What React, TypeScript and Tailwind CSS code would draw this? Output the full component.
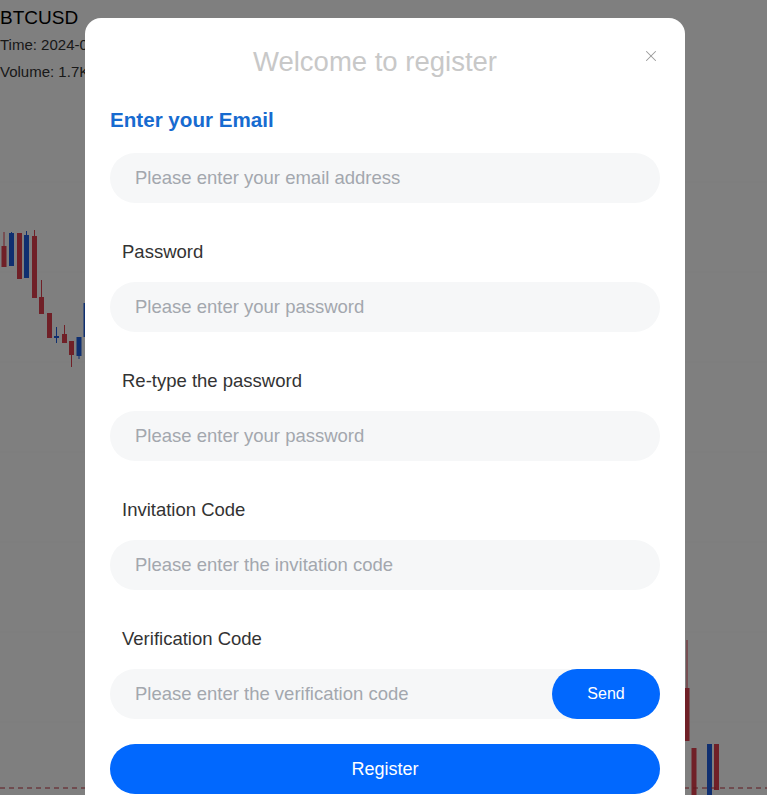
import React from 'react';
import { X } from 'lucide-react';

type Candle = { x: number; o: number; c: number; h: number; l: number; up: boolean };

// candles drawn in page coordinates (the chart behind the modal)
const candles: Candle[] = [
  { x: 4, o: 246, c: 267, h: 232, l: 267, up: false },
  { x: 11.5, o: 233, c: 266, h: 232, l: 266, up: true },
  { x: 19.5, o: 233, c: 279, h: 233, l: 279, up: false },
  { x: 26.5, o: 235, c: 278, h: 231, l: 278, up: true },
  { x: 34.5, o: 236, c: 298, h: 230, l: 298, up: false },
  { x: 41.5, o: 297, c: 314, h: 280, l: 314, up: false },
  { x: 49.5, o: 313, c: 338, h: 313, l: 338, up: false },
  { x: 56.5, o: 336, c: 338, h: 327, l: 343, up: true },
  { x: 64.5, o: 334, c: 343, h: 325, l: 343, up: false },
  { x: 71.5, o: 341, c: 355, h: 341, l: 367, up: false },
  { x: 79, o: 337, c: 356, h: 337, l: 359, up: true },
  { x: 86, o: 303, c: 337, h: 300, l: 340, up: true },
  { x: 687, o: 688, c: 741, h: 640, l: 741, up: false },
  { x: 694, o: 748, c: 800, h: 748, l: 800, up: false },
  { x: 709.5, o: 744, c: 800, h: 744, l: 800, up: true },
  { x: 716.5, o: 744, c: 790, h: 744, l: 790, up: false },
];

function Chart() {
  return (
    <svg className="absolute inset-0" width={767} height={795}>
      {[182, 272, 362, 452, 542, 632, 722].map((y) => (
        <line key={y} x1={0} x2={767} y1={y} y2={y} stroke="#f9f9f9" strokeWidth={1} />
      ))}
      {candles.map((k, i) => {
        const color = k.up ? '#1e5fe0' : '#e0404f';
        const top = Math.min(k.o, k.c);
        const bh = Math.max(Math.abs(k.c - k.o), 1.5);
        return (
          <g key={i}>
            <line x1={k.x} x2={k.x} y1={k.h} y2={k.l} stroke={color} strokeWidth={1} />
            <rect x={k.x - 2.5} y={top} width={5} height={bh} fill={color} />
          </g>
        );
      })}
      <line x1={0} x2={767} y1={788} y2={788} stroke="#c0303f" strokeWidth={1} strokeDasharray="5 4" />
    </svg>
  );
}

function Field({ placeholder }: { placeholder: string }) {
  return (
    <div className="h-[50px] rounded-full bg-[#f6f7f8] flex items-center pl-[25px] text-[18.5px] text-[#a3a7ae]">
      {placeholder}
    </div>
  );
}

function Label({ children }: { children: React.ReactNode }) {
  return (
    <div className="pt-[37px] pb-[18px] pl-[12px] text-[18.5px] leading-[24px] text-[#333]">{children}</div>
  );
}

export default function App() {
  return (
    <div
      className="relative w-[767px] h-[795px] overflow-hidden bg-white"
      style={{ fontFamily: '"Liberation Sans", Arial, sans-serif' }}
    >
      <Chart />
      {/* chart header */}
      <div className="relative flex flex-col text-[#333]">
        <div className="h-[36px] flex items-center text-[19px] text-black">BTCUSD</div>
        <div className="h-[18px] flex items-center text-[15px]">Time: 2024-05-20 14:00</div>
        <div className="h-[36px] flex items-center text-[15px]">Volume: 1.7K</div>
      </div>
      <div className="absolute left-[662px] top-[34px] text-[15px] text-[#333]">32</div>

      {/* overlay */}
      <div className="absolute inset-0 bg-black/50" />

      {/* register modal */}
      <div className="absolute left-[85px] top-[18px] w-[600px] h-[800px] rounded-t-[16px] bg-white px-[25px] pt-[28px]">
        <button className="absolute right-[25px] top-[29px] text-[#9a9a9a]">
          <X size={18} strokeWidth={1.4} />
        </button>
        <div className="h-[32px] pr-[20px] text-center text-[27.5px] leading-[32px] text-[#c8c8c8]">Welcome to register</div>
        <div className="pt-[30px] pb-[21px] text-[20.6px] leading-[24px] font-bold text-[#176bd0]">Enter your Email</div>
        <Field placeholder="Please enter your email address" />
        <Label>Password</Label>
        <Field placeholder="Please enter your password" />
        <Label>Re-type the password</Label>
        <Field placeholder="Please enter your password" />
        <Label>Invitation Code</Label>
        <Field placeholder="Please enter the invitation code" />
        <Label>Verification Code</Label>
        <div className="h-[50px] rounded-full bg-[#f6f7f8] flex items-center">
          <div className="flex-1 pl-[25px] text-[18.5px] text-[#a3a7ae]">Please enter the verification code</div>
          <button className="h-[50px] w-[108px] rounded-full bg-[#0168fe] text-white text-[16px]">Send</button>
        </div>
        <button className="mt-[25px] h-[50px] w-full rounded-full bg-[#0168fe] text-white text-[18px]">Register</button>
      </div>
    </div>
  );
}
